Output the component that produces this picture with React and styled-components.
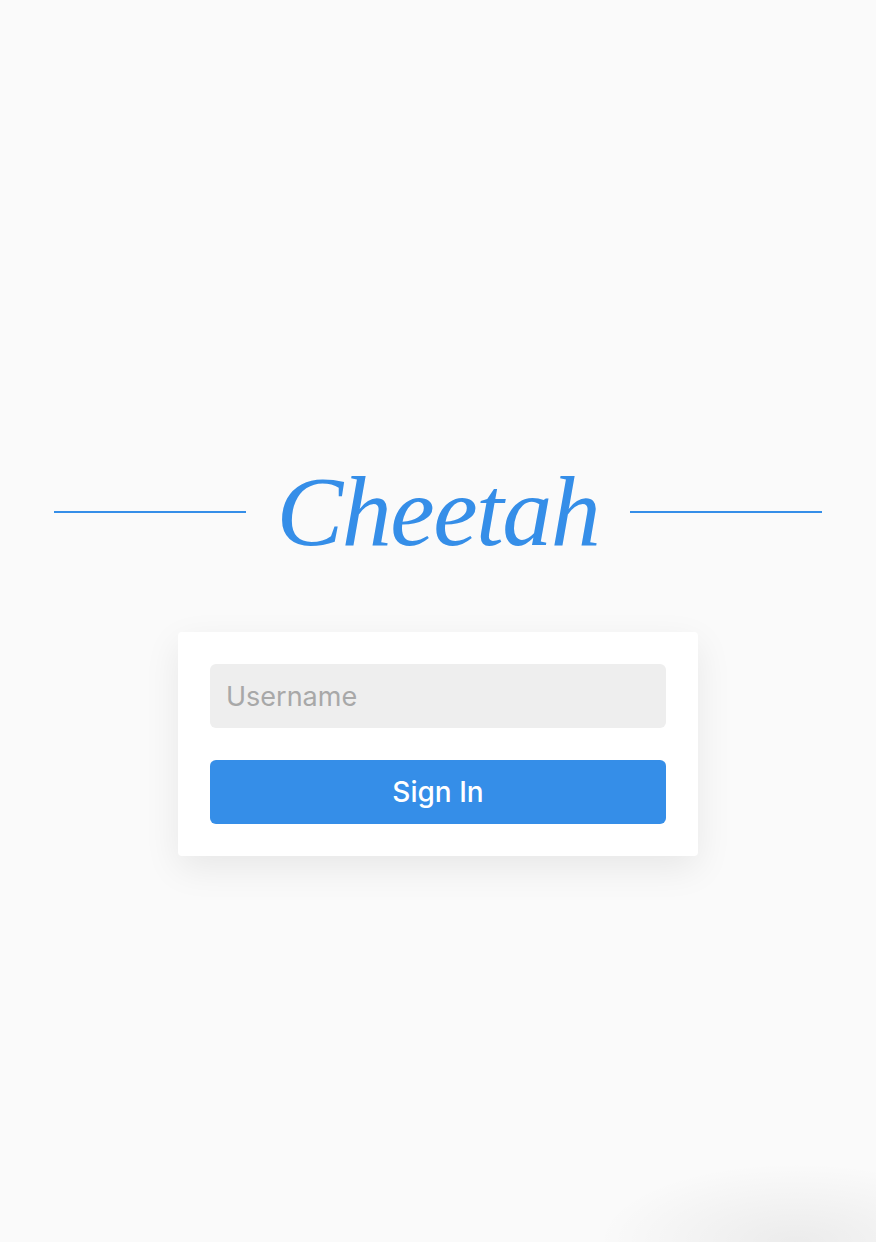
import React from 'react';
import styled, { createGlobalStyle } from 'styled-components';

const GlobalStyle = createGlobalStyle`
    html, body {
        margin: 0;
        padding: 0;
        background: #fafafa;
        font-family: Inter, "Liberation Sans", sans-serif;
    }
`;

export default function App() {
    return (
        <>
            <GlobalStyle />
            <Page>
                <Header>
                    <Rule />
                    <Title>Cheetah</Title>
                    <Rule />
                </Header>
                <Card>
                    <Input placeholder="Username" />
                    <Button>Sign In</Button>
                </Card>
                <CornerShade />
            </Page>
        </>
    );
}

const Page = styled.div`
    position: relative;
    width: 100%;
    height: 1242px;
    overflow: hidden;
    display: flex;
    flex-direction: column;
    align-items: center;
    padding-top: 458px;
    box-sizing: border-box;
`;

const Header = styled.div`
    display: flex;
    align-items: center;
    gap: 31px;
    margin-left: 0;
`;

const Rule = styled.div`
    width: 192px;
    height: 2px;
    background: #358ee8;
`;

const Title = styled.h1`
    margin: 0;
    font-family: "Liberation Serif", "Times New Roman", serif;
    font-style: italic;
    font-weight: 400;
    font-size: 100px;
    letter-spacing: -1.5px;
    line-height: 108px;
    color: #358ee8;
`;

const Card = styled.div`
    margin-top: 66px;
    width: 520px;
    padding: 32px;
    box-sizing: border-box;
    background: #fff;
    border-radius: 4px;
    box-shadow: 0 12px 36px rgba(0, 0, 0, 0.08);
    display: flex;
    flex-direction: column;
    gap: 32px;
`;

const Input = styled.input`
    height: 64px;
    border: none;
    border-radius: 6px;
    background: #eeeeee;
    padding: 0 16px;
    font-family: Inter, "Liberation Sans", sans-serif;
    font-size: 27px;
    color: #333;
    outline: none;
    &::placeholder {
        color: #a8a8a8;
    }
`;

const Button = styled.button`
    height: 64px;
    border: none;
    border-radius: 6px;
    background: #358ee8;
    color: #fff;
    font-family: Inter, "Liberation Sans", sans-serif;
    font-size: 28px;
    font-weight: 500;
    cursor: pointer;
`;

const CornerShade = styled.div`
    position: absolute;
    right: -120px;
    bottom: -80px;
    width: 400px;
    height: 160px;
    border-radius: 50%;
    background: radial-gradient(ellipse at center, rgba(0, 0, 0, 0.06), rgba(0, 0, 0, 0) 70%);
    pointer-events: none;
`;
